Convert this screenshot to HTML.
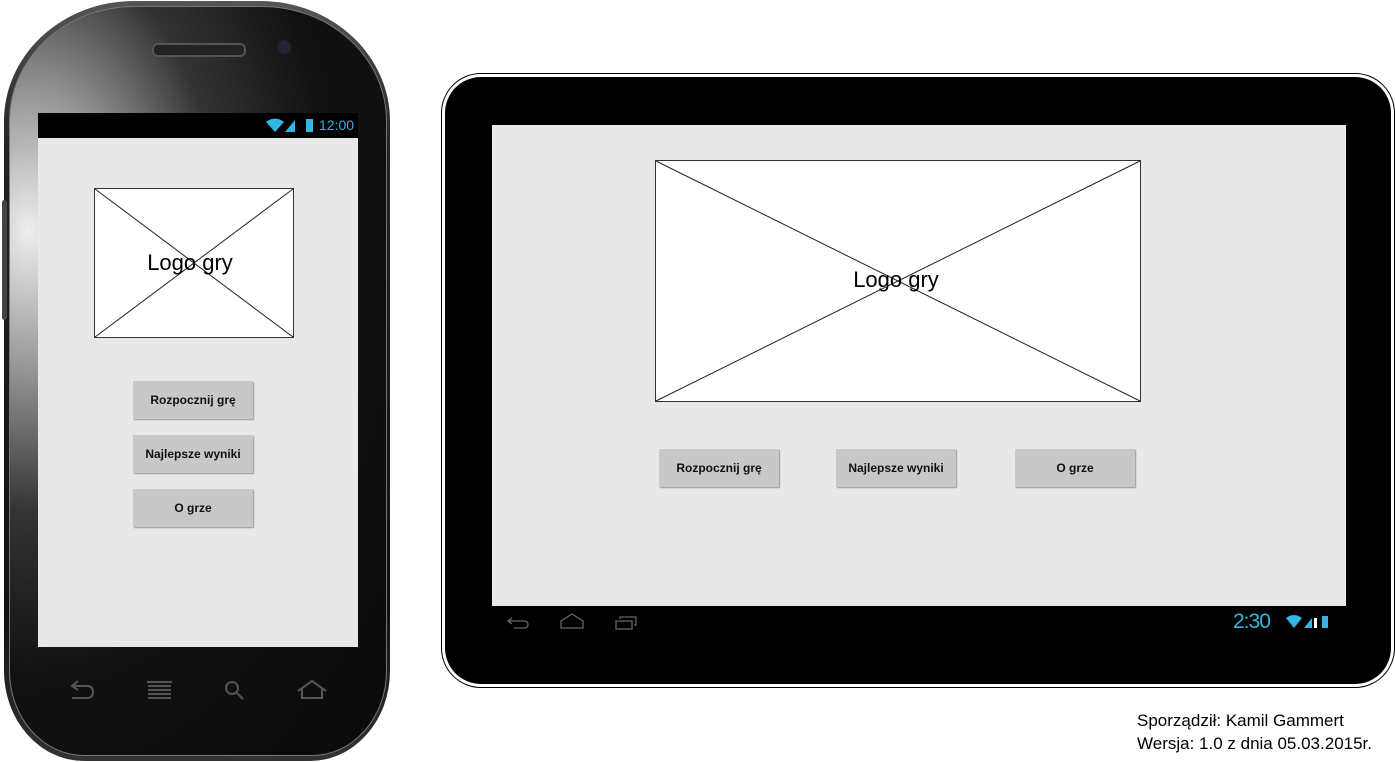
<!DOCTYPE html>
<html><head><meta charset="utf-8"><style>
body{margin:0;width:1395px;height:762px;background:#fff;position:relative;overflow:hidden;font-family:"Liberation Sans",sans-serif}
.abs{position:absolute}
.btn{position:absolute;width:120px;height:38px;background:#c8c8c8;box-shadow:1px 1px 1px #999;font-size:12px;font-weight:bold;display:flex;align-items:center;justify-content:center;color:#111}
</style></head><body>
<!-- phone -->
<div class="abs" style="left:4px;top:1px;width:386px;height:760px;border-radius:130px 130px 80px 80px/120px 120px 90px 90px;background:linear-gradient(180deg,#555,#222 20%,#111 80%,#333);"></div>
<div class="abs" style="left:9px;top:6px;width:376px;height:748px;border-radius:125px 125px 75px 75px/115px 115px 85px 85px;background:radial-gradient(ellipse at 5% 30%,#eee 0%,#999 18%,#333 38%,#111 60%,#0a0a0a);border:1px solid #777"></div>
<div class="abs" style="left:2px;top:200px;width:5px;height:120px;background:#444;border-radius:3px"></div>
<div class="abs" style="left:152px;top:43px;width:90px;height:10px;border-radius:6px;background:#222;border:2px solid #555"></div>
<div class="abs" style="left:277px;top:40px;width:14px;height:14px;border-radius:50%;background:#223"></div>
<div class="abs" style="left:38px;top:113px;width:320px;height:534px;background:#e8e8e8"></div>
<div class="abs" style="left:38px;top:113px;width:320px;height:25px;background:#000"></div>
<div class="abs" style="left:319px;top:117px;color:#33b5e5;font-size:14px">12:00</div>
<svg class="abs" style="left:265px;top:116px" width="50" height="18"><path d="M1 6 Q10 -1 19 6 L10 16Z" fill="#33b5e5"/><path d="M20 16 L30 4 L30 16Z" fill="#33b5e5"/><rect x="41" y="3" width="7" height="13" fill="#33b5e5"/></svg>
<div class="abs" style="left:94px;top:188px;width:198px;height:148px;background:#fff;border:1px solid #333"></div>
<svg class="abs" style="left:94px;top:188px" width="200" height="150"><line x1="1" y1="1" x2="199" y2="149" stroke="#222"/><line x1="199" y1="1" x2="1" y2="149" stroke="#222"/></svg>
<div class="abs" style="left:90px;top:250px;width:200px;text-align:center;font-size:22px">Logo gry</div>
<div class="btn" style="left:133px;top:381px">Rozpocznij grę</div>
<div class="btn" style="left:133px;top:435px">Najlepsze wyniki</div>
<div class="btn" style="left:133px;top:489px">O grze</div>
<svg class="abs" style="left:60px;top:670px" width="280" height="40" stroke="#555" fill="none" stroke-width="2"><path d="M12 16 H27 Q33 16 33 22 Q33 28 27 28 H12 M18 11 L12 16 L18 20"/><path d="M87 12 H112 M88 16 H111 M88 20 H111 M88 24 H111 M88 28 H111"/><circle cx="172" cy="18" r="6"/><path d="M177 23 L183 29"/><path d="M238 21 L252 11 L266 21 M242 19 V28 H262 V19"/></svg>
<!-- tablet -->
<div class="abs" style="left:441px;top:73px;width:952px;height:613px;border:1px solid #000;border-radius:40px;background:#fff"></div>
<div class="abs" style="left:445px;top:77px;width:946px;height:607px;border-radius:36px;background:#000"></div>
<div class="abs" style="left:492px;top:125px;width:854px;height:481px;background:#e8e8e8"></div>
<div class="abs" style="left:655px;top:160px;width:484px;height:240px;background:#fff;border:1px solid #333"></div>
<svg class="abs" style="left:655px;top:160px" width="486" height="242"><line x1="1" y1="1" x2="485" y2="241" stroke="#222"/><line x1="485" y1="1" x2="1" y2="241" stroke="#222"/></svg>
<div class="abs" style="left:653px;top:267px;width:486px;text-align:center;font-size:22px">Logo gry</div>
<div class="btn" style="left:659px;top:449px">Rozpocznij grę</div>
<div class="btn" style="left:836px;top:449px">Najlepsze wyniki</div>
<div class="btn" style="left:1015px;top:449px">O grze</div>
<svg class="abs" style="left:500px;top:610px" width="150" height="24" stroke="#666" fill="none" stroke-width="1.3"><path d="M12 8 L8 11 L12 14 M8 11 H24 Q28 11 28 14.5 Q28 18 24 18 H14"/><path d="M61 11 L72 4 L83 11 V18 H61Z"/><rect x="116" y="11" width="16" height="8"/><path d="M120 9 V7 H136 V15 H134"/></svg>
<div class="abs" style="left:1233px;top:610px;color:#33b5e5;font-size:21px;letter-spacing:-1px">2:30</div>
<svg class="abs" style="left:1286px;top:613px" width="50" height="18"><path d="M0 5 Q8 -1 16 5 L8 15Z" fill="#33b5e5"/><path d="M18 15 L26 5 V15Z" fill="#33b5e5"/><rect x="28" y="5" width="3" height="10" fill="#fff"/><rect x="36" y="3" width="6" height="12" fill="#33b5e5"/></svg>
<div class="abs" style="left:1137px;top:709px;font-size:17px;line-height:23px;color:#000">Sporządził: Kamil Gammert<br>Wersja: 1.0 z dnia 05.03.2015r.</div>
</body></html>
